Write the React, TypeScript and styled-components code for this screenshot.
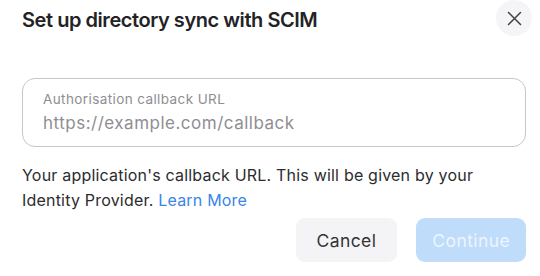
import React from "react";
import styled, { createGlobalStyle } from "styled-components";

const Global = createGlobalStyle`
  html, body { margin: 0; padding: 0; background: #ffffff; }
  body { font-family: Inter, "Noto Sans", "Liberation Sans", sans-serif; -webkit-font-smoothing: antialiased; }
  * { box-sizing: border-box; }
`;

const Dialog = styled.div`
  width: 540px;
  height: 276px;
  padding: 0 14px 0 22px;
  background: #ffffff;
  display: flex;
  flex-direction: column;
`;

const Header = styled.div`
  display: flex;
  align-items: flex-start;
  justify-content: space-between;
`;

const Title = styled.h1`
  margin: 0;
  padding-top: 8px;
  font-size: 20px;
  line-height: 24px;
  font-weight: 600;
  color: #232325;
  letter-spacing: -0.45px;
`;

const CloseButton = styled.button`
  margin-top: 0;
  margin-right: -6px;
  width: 36px;
  height: 36px;
  border: none;
  border-radius: 50%;
  background: #f5f5f7;
  color: #404042;
  display: flex;
  align-items: center;
  justify-content: center;
  padding: 0;
  cursor: pointer;
`;

const Field = styled.div`
  margin-top: 42px;
  height: 69px;
  border: 1px solid #c7c7cb;
  border-radius: 13px;
  padding: 12px 20px 12px 20px;
  display: flex;
  flex-direction: column;
  gap: 5px;
`;

const FieldLabel = styled.label`
  font-size: 13.5px;
  line-height: 16px;
  letter-spacing: 0.4px;
  color: #8e8e93;
`;

const FieldInput = styled.input`
  border: none;
  outline: none;
  padding: 0;
  margin: 0;
  font-family: inherit;
  font-size: 17px;
  line-height: 22px;
  height: 22px;
  letter-spacing: 0.5px;
  color: #333;
  background: transparent;
  &::placeholder { color: #8e8e93; }
`;

const Help = styled.p`
  margin: 16px 0 0 0;
  font-size: 16px;
  line-height: 25px;
  letter-spacing: 0.2px;
  color: #2c2c2e;
`;

const Link = styled.a`
  color: #3a85e6;
  text-decoration: none;
`;

const Actions = styled.div`
  margin-top: 5px;
  display: flex;
  justify-content: flex-end;
  gap: 19px;
`;

const Button = styled.button<{ $primary?: boolean }>`
  height: 44px;
  padding: 0 ${(p) => (p.$primary ? "16px" : "21px")};
  border: none;
  border-radius: 9px;
  font-family: inherit;
  font-size: 17.5px;
  letter-spacing: 0.4px;
  font-weight: 400;
  background: ${(p) => (p.$primary ? "#bfdcfb" : "#f4f4f6")};
  color: ${(p) => (p.$primary ? "#eef5fe" : "#333335")};
  cursor: pointer;
`;

export default function App() {
  return (
    <>
      <Global />
      <Dialog>
        <Header>
          <Title>Set up directory sync with SCIM</Title>
          <CloseButton aria-label="Close">
            <svg width="15" height="15" viewBox="0 0 15 15" fill="none">
              <path d="M1.5 1.5L13.5 13.5M13.5 1.5L1.5 13.5" stroke="currentColor" strokeWidth="1.5" strokeLinecap="round" />
            </svg>
          </CloseButton>
        </Header>
        <Field>
          <FieldLabel htmlFor="cb">Authorisation callback URL</FieldLabel>
          <FieldInput id="cb" placeholder="https://example.com/callback" />
        </Field>
        <Help>
          Your application's callback URL. This will be given by your Identity Provider.{" "}
          <Link href="#">Learn More</Link>
        </Help>
        <Actions>
          <Button>Cancel</Button>
          <Button $primary disabled>Continue</Button>
        </Actions>
      </Dialog>
    </>
  );
}
